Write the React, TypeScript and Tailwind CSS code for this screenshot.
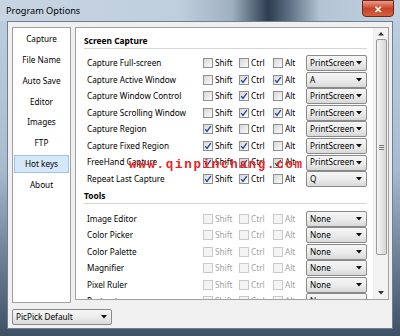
import React from "react";

const font = { fontFamily: '"Noto Sans", "Open Sans", sans-serif' };

type Row = { label: string; s: boolean; c: boolean; a: boolean; key: string };

const capture: Row[] = [
  { label: "Capture Full-screen", s: false, c: false, a: false, key: "PrintScreen" },
  { label: "Capture Active Window", s: false, c: true, a: true, key: "A" },
  { label: "Capture Window Control", s: false, c: true, a: false, key: "PrintScreen" },
  { label: "Capture Scrolling Window", s: false, c: true, a: true, key: "PrintScreen" },
  { label: "Capture Region", s: true, c: false, a: false, key: "PrintScreen" },
  { label: "Capture Fixed Region", s: true, c: true, a: false, key: "PrintScreen" },
  { label: "FreeHand Capture", s: true, c: true, a: true, key: "PrintScreen" },
  { label: "Repeat Last Capture", s: true, c: true, a: false, key: "Q" },
];

const tools = ["Image Editor", "Color Picker", "Color Palette", "Magnifier", "Pixel Ruler", "Protractor"];

function Check({ on, disabled }: { on: boolean; disabled?: boolean }) {
  return (
    <div
      className={
        "w-[10px] h-[10px] border flex items-center justify-center shrink-0 " +
        (disabled
          ? "border-[#cacaca] bg-[#f4f4f4]"
          : "border-[#8e8f8f] bg-gradient-to-br from-[#d8d8d8] to-[#fbfbfb]")
      }
    >
      {on && (
        <svg width="8" height="8" viewBox="0 0 8 8">
          <path d="M1.2 4.2 L3 6.4 L6.8 1.2" stroke="#21438f" strokeWidth="1.3" fill="none" />
        </svg>
      )}
    </div>
  );
}

function Combo({ text, w = "w-[61px]" }: { text: string; w?: string }) {
  return (
    <div
      className={
        w +
        " h-[16px] border border-[#8a8a8a] rounded-[2px] bg-gradient-to-b from-[#f6f6f6] via-[#ececec] to-[#d9d9d9] flex items-center justify-between pl-[3px] pr-[4px] shrink-0"
      }
    >
      <span className="text-[8.2px] text-black leading-none">{text}</span>
      <svg width="6" height="4" viewBox="0 0 6 4">
        <path d="M0 0 H6 L3 3.5 Z" fill="#111" />
      </svg>
    </div>
  );
}

function HotRow({ r, disabled }: { r: Row; disabled?: boolean }) {
  const tc = disabled ? "text-[#a3a3a3]" : "text-black";
  return (
    <div className="h-[16.55px] flex items-center">
      <div className="w-[119px] text-[8.2px] text-black pl-[3px] whitespace-nowrap">{r.label}</div>
      <div className="w-[36px] flex items-center gap-[2px]">
        <Check on={r.s} disabled={disabled} />
        <span className={"text-[8.2px] " + tc}>Shift</span>
      </div>
      <div className="w-[34px] flex items-center gap-[2px]">
        <Check on={r.c} disabled={disabled} />
        <span className={"text-[8.2px] " + tc}>Ctrl</span>
      </div>
      <div className="w-[33px] flex items-center gap-[2px]">
        <Check on={r.a} disabled={disabled} />
        <span className={"text-[8.2px] " + tc}>Alt</span>
      </div>
      <Combo text={r.key} />
    </div>
  );
}

function Section({ title }: { title: string }) {
  return (
    <div className="mr-[6px]">
      <div className="text-[8.4px] font-bold text-black leading-[12px]">{title}</div>
      <div className="h-px bg-[#d5d5d5] mt-[1px]" />
    </div>
  );
}

export default function App() {
  const nav = ["Capture", "File Name", "Auto Save", "Editor", "Images", "FTP", "Hot keys", "About"];
  return (
    <div
      style={font}
      className="w-[400px] h-[336px] relative overflow-hidden flex flex-col bg-gradient-to-b from-[#bfcfdf] via-[#a9bccf] to-[#3e5064]"
    >
      {/* title bar */}
      <div className="h-[21px] relative shrink-0 bg-[linear-gradient(90deg,#c7d5e3_0%,#bfcedd_45%,#9fb0c1_58%,#2d3d4f_67%,#5a6c80_72%,#b4c4d4_80%,#c3d1df_100%)]">
        <span className="absolute left-[6px] top-[4px] text-[9.2px] text-black">Program Options</span>
        <div className="absolute left-[362px] top-0 w-[32px] h-[17px] rounded-b-[4px] border border-[#6b2a20] bg-gradient-to-b from-[#e99a86] via-[#c8432a] to-[#d6603a] flex items-center justify-center">
          <span className="text-white text-[10px] font-bold leading-none">✕</span>
        </div>
      </div>
      {/* client */}
      <div className="flex-1 mx-[7px] mb-[7px] bg-[#f0f0f0] border border-[#6d7f94] flex flex-col">
        <div className="flex gap-[4px] pl-[4px] pr-[3px] pt-[5px] h-[282px]">
          {/* sidebar */}
          <div className="w-[59px] h-[276px] bg-white border border-[#a0a0a0] pt-[1px] flex flex-col">
            {nav.map((n) => (
              <div key={n} className="h-[20.8px] flex items-center px-[1px]">
                <div
                  className={
                    "w-full h-[18px] flex items-center justify-center text-[8.2px] text-black " +
                    (n === "Hot keys" ? "bg-[#d6e7f8] border border-[#9cc3e8]" : "")
                  }
                >
                  {n}
                </div>
              </div>
            ))}
          </div>
          {/* main panel */}
          <div className="flex-1 h-[273px] bg-white border border-[#a0a0a0] flex overflow-hidden relative">
            <div className="flex-1 pl-[8px] pt-[7px] overflow-hidden">
              <Section title="Screen Capture" />
              <div className="mt-[6px]">
                {capture.map((r) => (
                  <HotRow key={r.label} r={r} />
                ))}
              </div>
              <div className="mt-[3px]">
                <Section title="Tools" />
              </div>
              <div className="mt-[6px]">
                {tools.map((t) => (
                  <HotRow key={t} r={{ label: t, s: false, c: false, a: false, key: "None" }} disabled />
                ))}
              </div>
            </div>
            {/* scrollbar */}
            <div className="w-[15px] h-full bg-[#f3f3f3] flex flex-col items-center border-l border-[#ececec]">
              <div className="h-[11px] flex items-center justify-center">
                <svg width="6" height="4" viewBox="0 0 6 4">
                  <path d="M0 3.5 H6 L3 0 Z" fill="#333" />
                </svg>
              </div>
              <div className="w-[11px] h-[216px] rounded-[2px] border border-[#9a9a9a] bg-gradient-to-r from-[#f4f4f4] via-[#e6e6e6] to-[#d6d6d6] flex items-center justify-center">
                <div className="flex flex-col gap-[1px]">
                  <div className="w-[5px] h-px bg-[#777]" />
                  <div className="w-[5px] h-px bg-[#777]" />
                  <div className="w-[5px] h-px bg-[#777]" />
                </div>
              </div>
              <div className="flex-1" />
              <div className="h-[12px] flex items-center justify-center">
                <svg width="6" height="4" viewBox="0 0 6 4">
                  <path d="M0 0 H6 L3 3.5 Z" fill="#333" />
                </svg>
              </div>
            </div>
          </div>
        </div>
        <div className="pl-[4px] pt-[5px]">
          <Combo text="PicPick Default" w="w-[100px]" />
        </div>
      </div>
      {/* watermark */}
      <div
        className="absolute left-[129px] top-[159px] text-[12.5px] font-bold text-[#e8231e] tracking-[1.7px] leading-none whitespace-nowrap"
        style={{ fontFamily: '"Liberation Mono", monospace' }}
      >
        www.qinpinchang.com
      </div>
    </div>
  );
}
